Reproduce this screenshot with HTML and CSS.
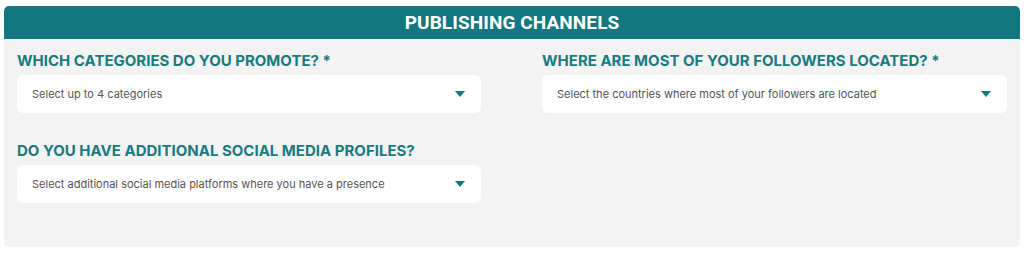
FILE: index.html
```html
<!DOCTYPE html>
<html lang="en">
<head>
    <meta charset="UTF-8">
    <title>Publishing Channels</title>
    <link rel="stylesheet" href="styles.css">
</head>
<body>

    <!-- Publishing channels panel -->
    <div class="panel">
        <div class="panel-header">
            <h2>Publishing Channels</h2>
        </div>

        <div class="fields">
            <div class="field">
                <label>Which categories do you promote? *</label>
                <div class="select">
                    <span>Select up to 4 categories</span>
                    <span class="arrow"></span>
                </div>
            </div>

            <div class="field">
                <label>Where are most of your followers located? *</label>
                <div class="select">
                    <span>Select the countries where most of your followers are located</span>
                    <span class="arrow"></span>
                </div>
            </div>

            <div class="field">
                <label>Do you have additional social media profiles?</label>
                <div class="select">
                    <span>Select additional social media platforms where you have a presence</span>
                    <span class="arrow"></span>
                </div>
            </div>
        </div>
    </div>

</body>
</html>
```

FILE: styles.css
```css
body {
    font-family: Inter, "Liberation Sans", sans-serif;
    margin: 0;
    padding: 6px 4px 0 4px;
    background-color: #fff;
}
.panel {
    background-color: #f3f3f3;
    border-radius: 5px;
    height: 241px;
}
.panel-header {
    background-color: #13777f;
    border-radius: 5px 5px 0 0;
    height: 33px;
    display: flex;
    align-items: center;
    justify-content: center;
}
.panel-header h2 {
    margin: 0;
    color: #fff;
    font-family: Roboto, sans-serif;
    font-size: 19px;
    font-weight: 700;
    text-transform: uppercase;
    letter-spacing: 0.1px;
}
.fields {
    display: grid;
    grid-template-columns: 464px 465px;
    column-gap: 61px;
    row-gap: 29px;
    padding: 13px 13px 0 13px;
}
.field label {
    display: block;
    color: #1a7a80;
    font-size: 15px;
    font-weight: 700;
    text-transform: uppercase;
    line-height: 18px;
    margin-bottom: 5px;
}
.select {
    background-color: #fff;
    border-radius: 6px;
    height: 38px;
    display: flex;
    align-items: center;
    justify-content: space-between;
    padding: 0 16px 0 15px;
    font-size: 11px;
    color: #555;
}
.arrow {
    width: 0;
    height: 0;
    border-left: 5px solid transparent;
    border-right: 5px solid transparent;
    border-top: 6px solid #13777f;
}
```
